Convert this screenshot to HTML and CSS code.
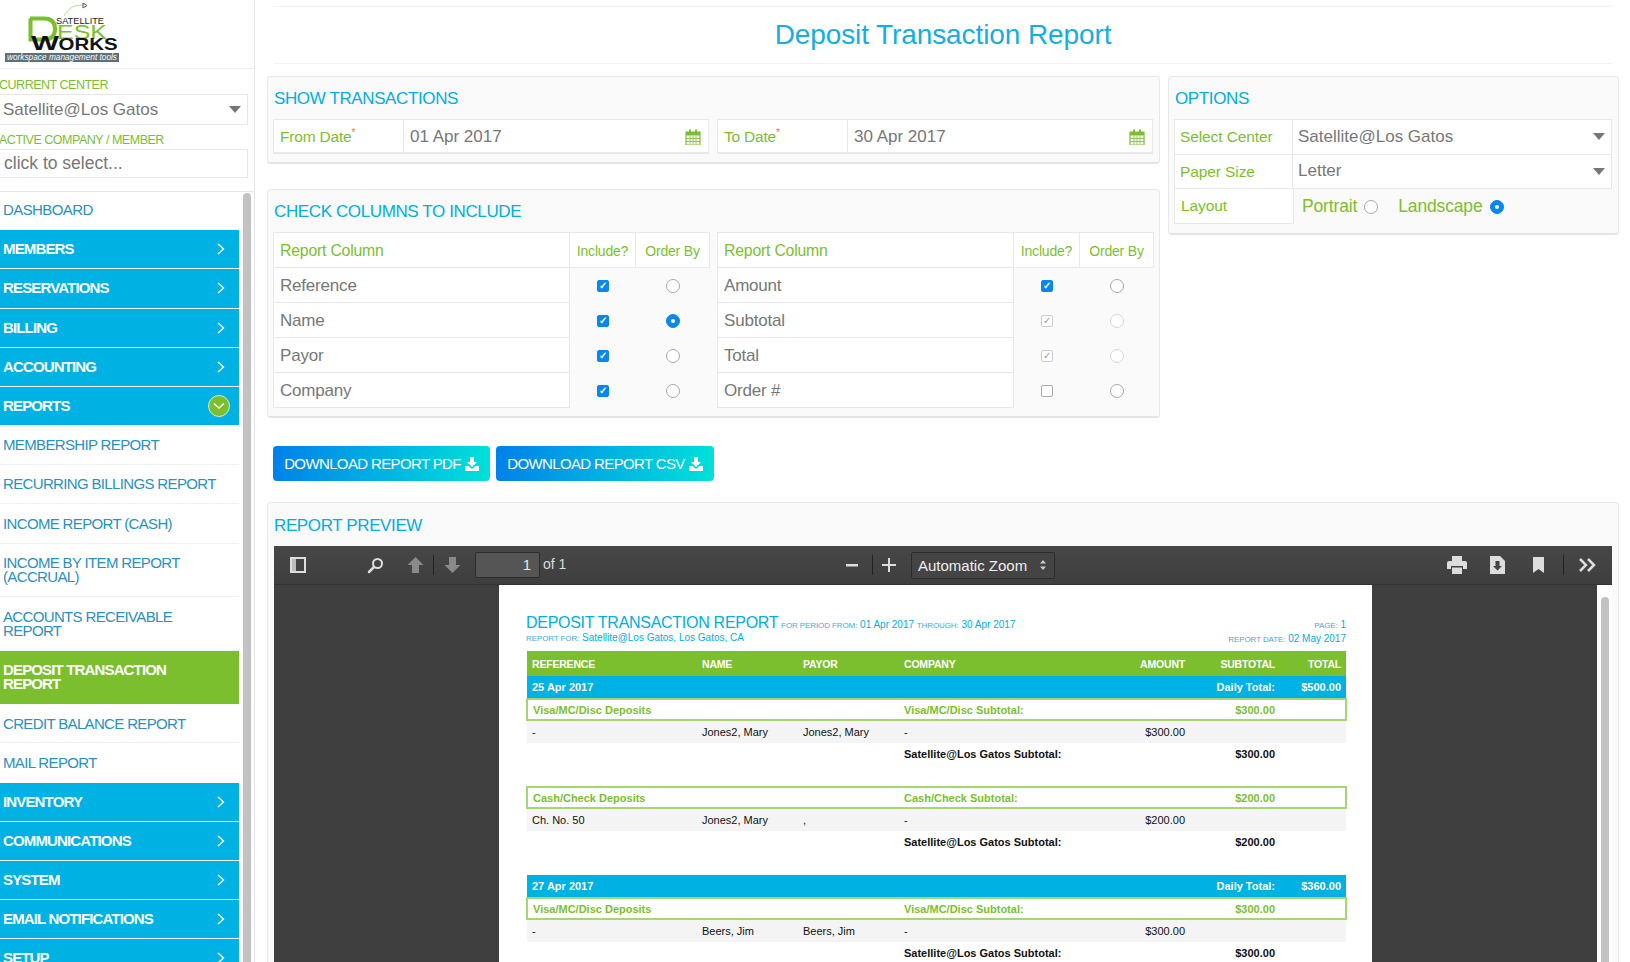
FILE: index.html
```html
<!DOCTYPE html>
<html lang="en">
<head>
<meta charset="utf-8">
<title>Deposit Transaction Report</title>
<link rel="stylesheet" href="styles.css">
</head>
<body>
<div class="app">
  <aside class="sidebar">
    <div class="logo">
      <svg class="logo-svg" width="122" height="64" viewBox="0 0 122 64">
        <path d="M64 16 C68 8 74 5 83 5" fill="none" stroke="#b9dc8a" stroke-width="1"/>
        <path d="M83 3 L87 5.500 L83 8 Z" fill="#fff" stroke="#555" stroke-width="1"/>
        <path d="M30 18.500 H44 C52 18.500 55 23 55 29 C55 35 52 39.500 44 39.500 H30.500 V18.500" fill="none" stroke="#7bbf2e" stroke-width="4"/>
        <text x="56" y="23.500" class="logo-sat" textLength="48" lengthAdjust="spacingAndGlyphs">SATELLITE</text>
        <text x="57" y="39" class="logo-esk" textLength="50" lengthAdjust="spacingAndGlyphs">ESK</text>
        <text x="31" y="50" class="logo-w" textLength="28" lengthAdjust="spacingAndGlyphs">W</text>
        <text x="58.500" y="50" class="logo-orks" textLength="59" lengthAdjust="spacingAndGlyphs">ORKS</text>
        <rect x="5" y="53" width="114" height="9" fill="#5d6f78"/>
        <text x="7" y="60" class="logo-tag" textLength="110" lengthAdjust="spacingAndGlyphs">workspace management tools</text>
      </svg>
    </div>
    <div class="side-label first">CURRENT CENTER</div>
    <div class="side-field select">Satellite@Los Gatos<span class="caret"></span></div>
    <div class="side-label">ACTIVE COMPANY / MEMBER</div>
    <div class="side-field input">click to select...</div>
    <div class="menu-wrap">
      <ul class="menu">
        <li class="item plain">DASHBOARD</li>
        <li class="item bar">MEMBERS<svg class="chev" width="8" height="12" viewBox="0 0 8 12"><path d="M1 1l5.500 5-5.500 5"/></svg></li>
        <li class="item bar">RESERVATIONS<svg class="chev" width="8" height="12" viewBox="0 0 8 12"><path d="M1 1l5.500 5-5.500 5"/></svg></li>
        <li class="item bar">BILLING<svg class="chev" width="8" height="12" viewBox="0 0 8 12"><path d="M1 1l5.500 5-5.500 5"/></svg></li>
        <li class="item bar">ACCOUNTING<svg class="chev" width="8" height="12" viewBox="0 0 8 12"><path d="M1 1l5.500 5-5.500 5"/></svg></li>
        <li class="item bar open">REPORTS<span class="open-badge"><svg width="12" height="8" viewBox="0 0 12 8"><path d="M1 1.500l5 4.500 5-4.500"/></svg></span></li>
        <li class="item sub">MEMBERSHIP REPORT</li>
        <li class="item sub">RECURRING BILLINGS REPORT</li>
        <li class="item sub">INCOME REPORT (CASH)</li>
        <li class="item sub tall">INCOME BY ITEM REPORT (ACCRUAL)</li>
        <li class="item sub tall">ACCOUNTS RECEIVABLE REPORT</li>
        <li class="item current">DEPOSIT TRANSACTION REPORT</li>
        <li class="item sub">CREDIT BALANCE REPORT</li>
        <li class="item sub last">MAIL REPORT</li>
        <li class="item bar">INVENTORY<svg class="chev" width="8" height="12" viewBox="0 0 8 12"><path d="M1 1l5.500 5-5.500 5"/></svg></li>
        <li class="item bar">COMMUNICATIONS<svg class="chev" width="8" height="12" viewBox="0 0 8 12"><path d="M1 1l5.500 5-5.500 5"/></svg></li>
        <li class="item bar">SYSTEM<svg class="chev" width="8" height="12" viewBox="0 0 8 12"><path d="M1 1l5.500 5-5.500 5"/></svg></li>
        <li class="item bar">EMAIL NOTIFICATIONS<svg class="chev" width="8" height="12" viewBox="0 0 8 12"><path d="M1 1l5.500 5-5.500 5"/></svg></li>
        <li class="item bar">SETUP<svg class="chev" width="8" height="12" viewBox="0 0 8 12"><path d="M1 1l5.500 5-5.500 5"/></svg></li>
      </ul>
      <div class="side-scroll"><div class="side-thumb"></div></div>
    </div>
  </aside>

  <main class="main">
    <header class="page-head"><h1>Deposit Transaction Report</h1></header>

    <div class="top-grid">
      <div class="left-col">
        <section class="panel show-panel">
          <h2>SHOW TRANSACTIONS</h2>
          <div class="date-grid">
            <div class="date-group">
              <div class="date-label">From Date<sup>*</sup></div>
              <div class="date-value">01 Apr 2017
                <svg class="cal" width="16" height="16" viewBox="0 0 16 16"><path d="M1 3h14v13H1z" fill="none" stroke="#7bbf2e" stroke-width="1.200"/><path d="M1 3h14v3.500H1z" fill="#7bbf2e"/><path d="M4 .5h2v4H4zM10 .5h2v4h-2z" fill="#7bbf2e"/><path d="M1 9.500h14M1 12.500h14M5 6.500v9M8 6.500v9M11 6.500v9" stroke="#7bbf2e" stroke-width=".8"/></svg>
              </div>
            </div>
            <div class="date-group">
              <div class="date-label">To Date<sup>*</sup></div>
              <div class="date-value">30 Apr 2017
                <svg class="cal" width="16" height="16" viewBox="0 0 16 16"><path d="M1 3h14v13H1z" fill="none" stroke="#7bbf2e" stroke-width="1.200"/><path d="M1 3h14v3.500H1z" fill="#7bbf2e"/><path d="M4 .5h2v4H4zM10 .5h2v4h-2z" fill="#7bbf2e"/><path d="M1 9.500h14M1 12.500h14M5 6.500v9M8 6.500v9M11 6.500v9" stroke="#7bbf2e" stroke-width=".8"/></svg>
              </div>
            </div>
          </div>
        </section>

        <section class="panel check-panel">
          <h2>CHECK COLUMNS TO INCLUDE</h2>
          <div class="date-grid">
            <table class="cols">
              <thead><tr><th class="c-name">Report Column</th><th class="c-inc">Include?</th><th class="c-ord">Order By</th></tr></thead>
              <tbody>
                <tr><td class="name">Reference</td><td><span class="cb on">✓</span></td><td><span class="rd"></span></td></tr>
                <tr><td class="name">Name</td><td><span class="cb on">✓</span></td><td><span class="rd on"></span></td></tr>
                <tr><td class="name">Payor</td><td><span class="cb on">✓</span></td><td><span class="rd"></span></td></tr>
                <tr><td class="name">Company</td><td><span class="cb on">✓</span></td><td><span class="rd"></span></td></tr>
              </tbody>
            </table>
            <table class="cols">
              <thead><tr><th class="c-name">Report Column</th><th class="c-inc">Include?</th><th class="c-ord">Order By</th></tr></thead>
              <tbody>
                <tr><td class="name">Amount</td><td><span class="cb on">✓</span></td><td><span class="rd"></span></td></tr>
                <tr><td class="name">Subtotal</td><td><span class="cb dis">✓</span></td><td><span class="rd dis"></span></td></tr>
                <tr><td class="name">Total</td><td><span class="cb dis">✓</span></td><td><span class="rd dis"></span></td></tr>
                <tr><td class="name">Order #</td><td><span class="cb"></span></td><td><span class="rd"></span></td></tr>
              </tbody>
            </table>
          </div>
        </section>
      </div>

      <section class="panel options-panel">
        <h2>OPTIONS</h2>
        <div class="opt-row"><div class="opt-label">Select Center</div><div class="opt-value">Satellite@Los Gatos<span class="caret"></span></div></div>
        <div class="opt-row"><div class="opt-label">Paper Size</div><div class="opt-value">Letter<span class="caret"></span></div></div>
        <div class="opt-row layout-row"><div class="opt-label">Layout</div>
          <div class="opt-radios"><span>Portrait</span><span class="rd"></span><span class="land">Landscape</span><span class="rd on"></span></div>
        </div>
      </section>
    </div>

    <div class="buttons">
      <div class="btn">DOWNLOAD REPORT PDF<svg width="14" height="14" viewBox="0 0 14 14"><path d="M5 0h4v5h3L7 10 2 5h3z" fill="#fff"/><path d="M0 9h3.500L7 12l3.500-3H14v5H0z" fill="#fff"/></svg></div>
      <div class="btn">DOWNLOAD REPORT CSV<svg width="14" height="14" viewBox="0 0 14 14"><path d="M5 0h4v5h3L7 10 2 5h3z" fill="#fff"/><path d="M0 9h3.500L7 12l3.500-3H14v5H0z" fill="#fff"/></svg></div>
    </div>

    <section class="panel preview-panel">
      <h2>REPORT PREVIEW</h2>
      <div class="viewer">
        <div class="toolbar">
          <svg class="t-side" width="16" height="16" viewBox="0 0 16 16"><path d="M1 1h14v14H1z" fill="none" stroke="#ddd" stroke-width="2"/><path d="M2 2h4v12H2z" fill="#bbb"/></svg>
          <svg class="t-search" width="17" height="17" viewBox="0 0 17 17"><circle cx="10.500" cy="6.500" r="4.500" fill="none" stroke="#ddd" stroke-width="2"/><path d="M7 10l-5 5" stroke="#ddd" stroke-width="2.500" stroke-linecap="round"/></svg>
          <svg class="t-up" width="17" height="16" viewBox="0 0 17 16"><path d="M8.500 0l8 8h-4.500v8H5V8H.5z" fill="#8a8a8a"/></svg>
          <span class="t-sep"></span>
          <svg class="t-down" width="17" height="16" viewBox="0 0 17 16"><path d="M8.500 16l8-8h-4.500V0H5v8H.5z" fill="#8a8a8a"/></svg>
          <div class="t-page">1</div>
          <span class="t-of">of 1</span>
          <svg class="t-minus" width="12" height="12" viewBox="0 0 12 12"><path d="M0 5h12v2.500H0z" fill="#ddd"/></svg>
          <span class="t-sep mid"></span>
          <svg class="t-plus" width="14" height="14" viewBox="0 0 14 14"><path d="M0 6h14v2H0zM6 0h2v14H6z" fill="#ddd"/></svg>
          <div class="t-zoom">Automatic Zoom<svg width="8" height="12" viewBox="0 0 8 12"><path d="M4 1l3 3.500H1zM4 11L1 7.500h6z" fill="#ccc"/></svg></div>
          <svg class="t-print" width="20" height="18" viewBox="0 0 20 18"><path d="M5 0h10v5H5zM2 5h16a2 2 0 0 1 2 2v6h-4v-3H4v3H0V7a2 2 0 0 1 2-2z" fill="#ddd"/><path d="M5 11.500h10V18H5z" fill="#ddd"/></svg>
          <svg class="t-save" width="15" height="18" viewBox="0 0 15 18"><path d="M0 0h10l5 5v13H0z" fill="#ddd"/><path d="M5.500 5h4v5h2.500l-4.500 4.500L3 10h2.500z" fill="#444"/></svg>
          <svg class="t-book" width="11" height="16" viewBox="0 0 11 16"><path d="M0 0h11v16l-5.500-4L0 16z" fill="#ddd"/></svg>
          <span class="t-sep end"></span>
          <svg class="t-more" width="17" height="14" viewBox="0 0 17 14"><path d="M1 1l6 6-6 6M9 1l6 6-6 6" fill="none" stroke="#ddd" stroke-width="2.500"/></svg>
        </div>
        <div class="viewer-body">
          <div class="gutter"></div>
          <div class="paper">
            <div class="rep-head">
              <div>
                <div class="rep-line1"><span class="rep-title">DEPOSIT TRANSACTION REPORT</span> <small>FOR PERIOD FROM:</small> 01 Apr 2017 <small>THROUGH:</small> 30 Apr 2017</div>
                <div class="rep-line2"><small>REPORT FOR:</small> Satellite@Los Gatos, Los Gatos, CA</div>
              </div>
              <div class="rep-right">
                <div class="rep-pg"><small>PAGE:</small> 1</div>
                <div class="rep-date"><small>REPORT DATE:</small> 02 May 2017</div>
              </div>
            </div>
            <table class="rep">
              <thead>
                <tr><th class="w-ref">REFERENCE</th><th class="w-nm">NAME</th><th class="w-nm">PAYOR</th><th class="w-co">COMPANY</th><th class="w-am r">AMOUNT</th><th class="w-su r">SUBTOTAL</th><th class="w-to r">TOTAL</th></tr>
              </thead>
              <tbody>
                <tr class="day"><td colspan="5">25 Apr 2017</td><td class="r">Daily Total:</td><td class="r">$500.00</td></tr>
                <tr class="group"><td colspan="3">Visa/MC/Disc Deposits</td><td colspan="2">Visa/MC/Disc Subtotal:</td><td class="r">$300.00</td><td></td></tr>
                <tr class="row"><td>-</td><td>Jones2, Mary</td><td>Jones2, Mary</td><td>-</td><td class="r">$300.00</td><td></td><td></td></tr>
                <tr class="sub-row"><td colspan="3"></td><td colspan="2">Satellite@Los Gatos Subtotal:</td><td class="r">$300.00</td><td></td></tr>
                <tr class="gap"><td colspan="7"></td></tr>
                <tr class="group"><td colspan="3">Cash/Check Deposits</td><td colspan="2">Cash/Check Subtotal:</td><td class="r">$200.00</td><td></td></tr>
                <tr class="row"><td>Ch. No. 50</td><td>Jones2, Mary</td><td>,</td><td>-</td><td class="r">$200.00</td><td></td><td></td></tr>
                <tr class="sub-row"><td colspan="3"></td><td colspan="2">Satellite@Los Gatos Subtotal:</td><td class="r">$200.00</td><td></td></tr>
                <tr class="gap"><td colspan="7"></td></tr>
                <tr class="day"><td colspan="5">27 Apr 2017</td><td class="r">Daily Total:</td><td class="r">$360.00</td></tr>
                <tr class="group"><td colspan="3">Visa/MC/Disc Deposits</td><td colspan="2">Visa/MC/Disc Subtotal:</td><td class="r">$300.00</td><td></td></tr>
                <tr class="row"><td>-</td><td>Beers, Jim</td><td>Beers, Jim</td><td>-</td><td class="r">$300.00</td><td></td><td></td></tr>
                <tr class="sub-row"><td colspan="3"></td><td colspan="2">Satellite@Los Gatos Subtotal:</td><td class="r">$300.00</td><td></td></tr>
              </tbody>
            </table>
          </div>
          <div class="gutter"></div>
          <div class="v-scroll"><div class="v-thumb"></div></div>
        </div>
      </div>
    </section>
  </main>
</div>
</body>
</html>
```
FILE: styles.css
```css
* { box-sizing: border-box; }
html, body { margin: 0; height: 962px; overflow: hidden; background: #fff; }
body { font-family: "Liberation Sans", Arial, sans-serif; color: #777; }
.app { display: flex; height: 962px; overflow: hidden; }

/* sidebar */
.sidebar { width: 255px; flex: none; border-right: 1px solid #e6e6e6; display: flex; flex-direction: column; height: 962px; overflow: hidden; }
.logo { height: 69px; flex: none; border-bottom: 1px solid #eee; }
.logo-svg { display: block; }
.logo-svg text { font-family: "Liberation Sans", Arial, sans-serif; }
.logo-sat { font-size: 9.500px; fill: #222; }
.logo-esk { font-size: 19.500px; fill: #7bbf2e; }
.logo-w { font-size: 21px; fill: #111; font-weight: 700; }
.logo-orks { font-size: 16.500px; fill: #111; font-weight: 700; }
.logo-tag { font-size: 8.500px; font-style: italic; fill: #fff; }
.side-label { font-size: 12.500px; line-height: 14px; color: #7bbf2e; letter-spacing: -.48px; margin-left: -1px; }
.side-label.first { margin-top: 9px; }
.side-label:not(.first) { margin-top: 8px; }
.side-field { margin: 2px 6px 0 -2px; background: #fff; border: 1px solid #e6e6e6; display: flex; align-items: center; padding-left: 4px; color: #777; }
.side-field.select { height: 31px; font-size: 17px; justify-content: space-between; padding-right: 6px; }
.side-field.input { height: 29px; font-size: 17.500px; padding-left: 5px; }
.caret { width: 0; height: 0; border-left: 6.500px solid transparent; border-right: 6.500px solid transparent; border-top: 7px solid #777; }
.menu-wrap { margin-top: 13px; border-top: 1px solid #e6e6e6; display: flex; flex: 1; min-height: 0; }
.menu { list-style: none; margin: 0; padding: 0; width: 239px; flex: none; }
.item { display: flex; align-items: center; justify-content: space-between; padding-left: 3px; font-size: 15px; line-height: 14px; letter-spacing: -.65px; }
.plain { height: 38px; color: #2a90c0; letter-spacing: -.6px; padding-bottom: 3px; }
.bar { height: 38.250px; margin-bottom: 1px; background: #00b1e4; color: #fff; font-weight: 700; letter-spacing: -.85px; padding-right: 14px; }
.bar.open { margin-bottom: 0; }
.sub { height: 39.500px; color: #2a90c0; border-bottom: 1px solid #f0f0f0; }
.sub.last { border-bottom: 0; height: 40px; }
.sub.tall { height: 53.500px; padding-right: 40px; }
.current { height: 53px; background: #7bbf2e; color: #fff; font-weight: 700; letter-spacing: -.85px; padding-right: 30px; }
.current + .sub { padding-top: 1px; }
.sub.last ~ .bar { height: 38px; }
.chev { fill: none; stroke: #fff; stroke-width: 1.400; }
.open-badge { width: 22px; height: 22px; margin-right: -5px; border-radius: 50%; background: #7bbf2e; border: 1px solid #d8ecc0; display: flex; align-items: center; justify-content: center; }
.open-badge svg { fill: none; stroke: #fff; stroke-width: 1.500; }
.side-scroll { flex: 1; padding: 1px 4px 0 4px; }
.side-thumb { width: 8px; height: 100%; background: #c2c2c2; border-radius: 4px 4px 0 0; }

/* main */
.main { flex: 1; min-width: 0; padding: 6px 11px 0 12px; display: flex; flex-direction: column; }
.page-head { flex: none; margin: 0 7px 0 7px; height: 58px; border-top: 1px solid #f2f2f2; border-bottom: 1px solid #f2f2f2; display: flex; align-items: center; justify-content: center; }
.page-head h1 { margin: 0; font-weight: 400; font-size: 28px; letter-spacing: -.1px; color: #16ade2; }
.top-grid { flex: none; display: grid; grid-template-columns: 893px 451px; gap: 8px; margin-top: 12px; align-items: start; }
.panel { background: #fafafa; border: 1px solid #e8e8e8; border-bottom: 2px solid #e4e4e4; border-radius: 4px; padding: 0 5px; }
.panel h2 { margin: 0; font-weight: 400; font-size: 17px; line-height: 22px; letter-spacing: -.38px; color: #00aee2; padding: 11px 0 9px 1px; }
.left-col { display: flex; flex-direction: column; gap: 25px; }
.date-grid { display: grid; grid-template-columns: 436px 436px; gap: 8px; }
.show-panel { height: 88px; }
.date-group { display: flex; height: 35px; background: #fff; border: 1px solid #e8e8e8; border-bottom-width: 2px; }
.date-label { width: 130px; flex: none; border-right: 1px solid #e8e8e8; color: #7bbf2e; font-size: 15.500px; letter-spacing: -.2px; padding: 8px 0 0 6px; }
.date-label sup { color: #f07a28; font-size: 10px; line-height: 0; }
.date-value { flex: 1; display: flex; align-items: center; justify-content: space-between; padding: 1px 7px 0 6px; font-size: 17px; }
.check-panel { height: 229px; }
.cols { border-collapse: collapse; table-layout: fixed; width: 436px; }
.cols th { font-weight: 400; color: #7bbf2e; background: #fff; border: 1px solid #e8e8e8; height: 35px; font-size: 14px; letter-spacing: -.2px; padding: 1px 0 0; text-align: center; }
.cols th.c-name { width: 296px; text-align: left; padding-left: 6px; font-size: 15.800px; }
.cols th.c-inc { width: 66px; }
.cols th.c-ord { width: 74px; }
.cols td { height: 35px; padding: 0; text-align: center; vertical-align: middle; }
.cols td.name { background: #fff; border: 1px solid #e8e8e8; text-align: left; padding: 1px 0 0 6px; font-size: 17px; letter-spacing: -.2px; }
.cb { display: inline-block; vertical-align: middle; width: 12px; height: 12px; border-radius: 2px; border: 1px solid #aaa; background: #fff; font-size: 10px; line-height: 10px; text-align: center; }
.cb.on { background: #0a86f0; border-color: #0a86f0; color: #fff; font-weight: 700; }
.cb.dis { border-color: #ccc; color: #999; }
.rd { display: inline-block; flex: none; vertical-align: middle; width: 14px; height: 14px; border-radius: 50%; border: 1px solid #a8a8a8; background: #fff; }
.rd.dis { border-color: #d5d5d5; }
.rd.on { background: #0a86f0; border-color: #0a86f0; position: relative; }
.rd.on::after { content: ""; position: absolute; left: 4px; top: 4px; width: 4px; height: 4px; border-radius: 50%; background: #fff; }
.options-panel { height: 159px; }
.opt-row { display: flex; height: 35.500px; width: 438px; background: #fff; border: 1px solid #e8e8e8; margin-top: -1px; }
.opt-row:first-of-type { margin-top: 0; }
.opt-label { width: 118px; flex: none; border-right: 1px solid #e8e8e8; color: #7bbf2e; font-size: 15.500px; letter-spacing: -.1px; padding: 8px 0 0 5px; }
.opt-value { flex: 1; display: flex; align-items: center; justify-content: space-between; padding: 0 6px 0 5px; font-size: 17px; }
.layout-row { background: transparent; border-color: transparent; }
.layout-row .opt-label { background: #fff; border: 1px solid #e8e8e8; margin: -1px 0 -1px -1px; width: 120px; padding-left: 6px; }
.opt-radios { display: flex; align-items: center; padding: 2px 0 0 8px; color: #7bbf2e; font-size: 17.500px; letter-spacing: -.15px; gap: 7px; }
.opt-radios .land { margin-left: 13px; }
.buttons { flex: none; display: flex; gap: 6px; margin: 28px 0 0 6px; }
.btn { width: 218px; height: 35px; display: flex; align-items: center; justify-content: center; gap: 4px; color: #fff; font-size: 15px; letter-spacing: -.63px; border-radius: 4px; background: linear-gradient(100deg, #0080ea, #00e2da); }
.btn:first-child { width: 217px; }
.preview-panel { flex: none; margin-top: 21px; height: 500px; width: 1352px; overflow: hidden; }
.preview-panel h2 { padding: 11.500px 0 9.500px 1px; }

/* pdf viewer */
.viewer { width: 1338px; height: 470px; margin-left: 1px; }
.toolbar { height: 39px; display: flex; align-items: center; background: linear-gradient(#474747, #3e3e3e); border-bottom: 1px solid #333; }
.toolbar svg { flex: none; }
.t-side { margin-left: 16px; }
.t-search { margin-left: 61px; }
.t-up { margin-left: 23px; }
.t-sep { width: 1px; height: 20px; background: #222; flex: none; margin-left: 9px; }
.t-down { margin-left: 10px; }
.t-page { width: 65px; height: 26px; margin-left: 14px; background: #555; border: 1px solid #2c2c2c; border-radius: 2px; color: #e6e6e6; font-size: 15px; text-align: right; padding: 3px 8px 0 0; }
.t-of { color: #ddd; font-size: 14px; margin-left: 3px; width: 24px; white-space: nowrap; padding-bottom: 2px; }
.t-minus { margin-left: 279px; }
.t-sep.mid { margin-left: 14px; }
.t-plus { margin-left: 9px; }
.t-zoom { width: 144px; height: 27px; margin-left: 15px; border: 1px solid #2c2c2c; border-radius: 2px; background: #444; color: #eee; font-size: 15px; display: flex; align-items: center; justify-content: space-between; padding: 0 7px 0 6px; }
.t-print { margin-left: 392px; }
.t-save { margin-left: 23px; }
.t-book { margin-left: 28px; }
.t-sep.end { margin-left: 19px; }
.t-more { margin-left: 15px; }
.viewer-body { display: flex; height: 431px; overflow: hidden; }
.gutter { width: 225px; flex: none; background: #3f3f3f; }
.paper { width: 873px; flex: none; background: #fff; padding: 29px 26px 0 27px; overflow: hidden; }
.v-scroll { width: 15px; flex: none; background: #fff; padding: 12px 3px 0 4px; }
.v-thumb { width: 8px; height: 100%; background: #c2c2c2; border-radius: 4px 4px 0 0; }

/* report */
.rep-head { display: flex; justify-content: space-between; height: 37px; color: #00aee2; font-size: 10px; }
.rep-head small { font-size: 8px; color: #4aa7d8; letter-spacing: -.1px; }
.rep-line1 { line-height: 18px; height: 18px; white-space: nowrap; }
.rep-title { font-size: 16px; letter-spacing: -.28px; }
.rep-line2 { line-height: 11px; }
.rep-right { text-align: right; padding-top: 4px; }
.rep-pg { line-height: 13px; }
.rep-date { line-height: 13px; }
.rep { border-collapse: collapse; table-layout: fixed; width: 819px; font-size: 11px; color: #111; }
.rep td, .rep th { padding: 0 5px; white-space: nowrap; text-align: left; }
.rep .r { text-align: right; }
.rep th { background: #7bbf2e; color: #fff; height: 25px; font-size: 10.500px; font-weight: 700; letter-spacing: -.2px; }
.w-ref { width: 170px; }
.w-nm { width: 101px; }
.w-co { width: 220px; }
.w-am { width: 71px; }
.w-su { width: 90px; }
.w-to { width: 66px; }
.day td { background: #00b1e4; color: #fff; font-weight: 700; height: 23px; }
.group td { background: #fff; color: #7bbf2e; font-weight: 700; height: 21px; border-top: 2px solid #a5d674; border-bottom: 2px solid #a5d674; }
.group td:first-child { border-left: 2px solid #a5d674; }
.group td:last-child { border-right: 2px solid #a5d674; }
.row td { background: #f4f4f4; height: 23px; }
.sub-row td { font-weight: 700; height: 22px; }
.gap td { height: 22px; }
```
